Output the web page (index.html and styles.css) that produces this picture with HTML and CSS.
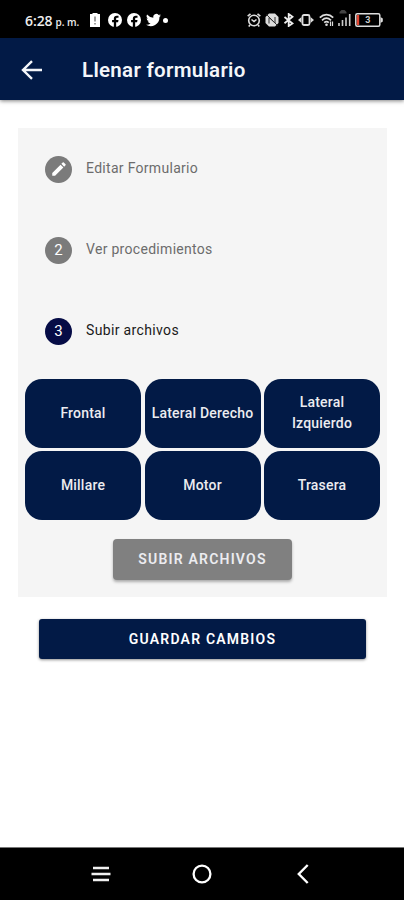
FILE: index.html
```html
<!DOCTYPE html>
<html lang="es">
<head>
<meta charset="utf-8">
<title>Llenar formulario</title>
<link rel="stylesheet" href="styles.css">
</head>
<body>
<div class="status">
  <span class="clock">6:28</span><span class="meridiem">p. m.</span>
  <div class="notifications">
    <svg width="10" height="14" viewBox="0 0 10 14"><path fill="#fff" d="M2.500 1V0h5v1H10v13H0V1z"/><path stroke="#777" stroke-width="1.400" d="M5 3.500v5M5 10v1.600"/></svg>
    <svg width="14" height="14" viewBox="0 0 24 24"><circle cx="12" cy="12" r="12" fill="#fff"/><path fill="#000" d="M10 24v-8H7v-4h3V9.500C10 6 12 4.500 15 4.500h3V8h-2c-1.500 0-2 .6-2 1.800V12h4l-.7 4H14v8z"/></svg>
    <svg width="14" height="14" viewBox="0 0 24 24"><circle cx="12" cy="12" r="12" fill="#fff"/><path fill="#000" d="M10 24v-8H7v-4h3V9.500C10 6 12 4.500 15 4.500h3V8h-2c-1.500 0-2 .6-2 1.800V12h4l-.7 4H14v8z"/></svg>
    <svg width="15" height="14" viewBox="0 2 24 20"><path fill="#fff" d="M24 4.600a10 10 0 0 1-2.800.8 5 5 0 0 0 2.100-2.700 10 10 0 0 1-3.100 1.200 4.900 4.900 0 0 0-8.400 4.500A14 14 0 0 1 1.700 3.200a4.900 4.900 0 0 0 1.500 6.500 5 5 0 0 1-2.200-.6 4.900 4.900 0 0 0 3.900 4.900 5 5 0 0 1-2.200.1 4.900 4.900 0 0 0 4.600 3.400A10 10 0 0 1 0 19.500 14 14 0 0 0 21.500 7.100 10 10 0 0 0 24 4.600z"/></svg>
    <i class="dot"></i>
  </div>
  <div class="system">
    <svg width="14" height="14" viewBox="0 0 14 14" fill="none" stroke="#ddd" stroke-width="1.600"><circle cx="7" cy="7.500" r="5.300"/><path d="M4.500 6.500L7 8.500l2.500-2M.7 3.200L3.500.8M13.300 3.200L10.500.8M3 12l-1.300 1.500M11 12l1.300 1.500"/></svg>
    <svg width="14" height="14" viewBox="0 0 14 14"><path fill="#ddd" d="M4 .5h6L13.500 4v6L10 13.500H4L.5 10V4z"/><path d="M4 10.500v-6l6 5.500V4M1.500 1.500l11 11" fill="none" stroke="#333" stroke-width="1"/></svg>
    <svg width="11" height="14" viewBox="0 0 10 14"><path d="M1 4l8 6.500L5.200 13V1L9 3.800 1 10.300" fill="none" stroke="#eee" stroke-width="1.800"/></svg>
    <svg width="16" height="12" viewBox="0 0 16 12"><rect x="4.500" y="1" width="7" height="10" rx="1.500" fill="none" stroke="#ddd" stroke-width="1.800"/><path fill="#ddd" d="M3.500 3v6L0 6zM12.500 3v6L16 6z"/></svg>
    <svg width="15" height="14" viewBox="0 0 15 14"><path d="M.8 4.700c4-4 9.400-4 13.400 0M3 7.300c2.800-2.600 6.200-2.600 9 0M5.200 9.700c1.500-1.300 3.100-1.300 4.600 0" fill="none" stroke="#ddd" stroke-width="1.700"/><circle cx="7.500" cy="11.800" r="1.300" fill="#ddd"/><path d="M11.500 13V8.500M13.500 8.500V13" stroke="#ddd" stroke-width="1.200"/></svg>
    <svg class="signal" width="13" height="18" viewBox="0 0 13 18"><path d="M1 17v-3M4.500 17v-6M8 17V8.500M11.700 17V5" stroke="#ccc" stroke-width="1.600"/><path d="M1.500 4.500V3L3.500 1h3l2 2v1.500z" fill="#444"/></svg>
    <svg width="28" height="14" viewBox="0 0 28 14"><rect x=".8" y=".8" width="24" height="12.400" rx="1.500" fill="none" stroke="#ddd" stroke-width="1.500"/><path fill="#ddd" d="M25.500 4l2.300 1.500v3L25.500 10z"/><path fill="#e24531" d="M1.800 2h2.400v10H1.800z"/><text x="12.900" y="10" text-anchor="middle" class="level">3</text></svg>
  </div>
</div>
<header class="appbar">
  <svg width="22" height="20" viewBox="0 0 22 20"><path d="M21 10H2M11 1.200L2 10l9 8.800" fill="none" stroke="#f4f6fa" stroke-width="2.400"/></svg>
  <h1>Llenar formulario</h1>
</header>
<main>
  <section class="card">
    <div class="step"><span class="badge"><svg width="18" height="18" viewBox="0 0 24 24"><path fill="#fff" d="M3 17.250V21h3.750L17.810 9.940l-3.750-3.750zM20.710 7.040a1 1 0 0 0 0-1.410l-2.340-2.340a1 1 0 0 0-1.410 0l-1.830 1.830 3.750 3.750z"/></svg></span><span class="label">Editar Formulario</span></div>
    <div class="step"><span class="badge">2</span><span class="label">Ver procedimientos</span></div>
    <div class="step active"><span class="badge">3</span><span class="label">Subir archivos</span></div>
    <div class="tiles">
      <button>Frontal</button><button>Lateral Derecho</button><button>Lateral<br>Izquierdo</button>
      <button>Millare</button><button>Motor</button><button>Trasera</button>
    </div>
    <button class="upload">SUBIR ARCHIVOS</button>
  </section>
  <button class="save">GUARDAR CAMBIOS</button>
</main>
<nav>
  <svg width="20" height="18" viewBox="0 0 20 18"><path d="M2 3h16M.5 9h19M2 15h16" fill="none" stroke="#f0f0f0" stroke-width="2.600"/></svg>
  <svg width="20" height="20" viewBox="0 0 20 20"><circle cx="10" cy="10" r="8.400" fill="none" stroke="#fff" stroke-width="2.300"/></svg>
  <svg width="12" height="20" viewBox="0 0 12 20"><path d="M10.700 1L1.800 10l8.900 9" fill="none" stroke="#fff" stroke-width="2.400"/></svg>
</nav>
</body>
</html>
```
FILE: styles.css
```css
* { box-sizing: border-box; }
body {
  margin: 0;
  height: 900px;
  display: flex;
  flex-direction: column;
  background: #fff;
  font-family: Roboto, sans-serif;
  overflow: hidden;
}
svg { display: block; flex: none; }
button {
  border: 0;
  padding: 0;
  font-family: inherit;
  color: #ececf0;
}
.status {
  height: 38px;
  flex: none;
  display: flex;
  align-items: center;
  padding: 2px 21px 0 25px;
  background: #000;
  color: #eee;
}
.clock { font: 600 14px "Open Sans", sans-serif; letter-spacing: -.1px; }
.meridiem { font: 600 10px "Open Sans", sans-serif; margin: 3px 0 0 3px; width: 25px; white-space: nowrap; }
.notifications { display: flex; align-items: center; margin-left: 10px; gap: 5px; }
.notifications svg:first-child { margin-right: 3px; }
.dot { width: 5px; height: 5px; border-radius: 50%; background: #fff; margin-left: -3px; }
.system { display: flex; align-items: center; gap: 4.200px; margin-left: auto; }
.signal { margin-top: -4px; }
.level { font: 700 9px Roboto, sans-serif; fill: #ccc; }
.appbar {
  height: 62px;
  flex: none;
  display: flex;
  align-items: center;
  padding: 2px 21px 0;
  gap: 39px;
  background: #021a46;
  box-shadow: 0 1px 4px rgba(0, 0, 0, .5);
}
h1 { margin: 0; font-size: 20.500px; font-weight: 600; color: #f4f6fa; letter-spacing: .3px; }
main { flex: 1; padding: 28px 17px 0 18px; }
.card { height: 469px; background: #f5f5f5; padding-top: .5px; }
.step {
  height: 81px;
  display: flex;
  align-items: center;
  padding-left: 27px;
  gap: 14px;
  font-size: 14px;
  color: #6c6c6c;
}
.badge {
  width: 27px;
  height: 27px;
  border-radius: 50%;
  background: #7b7b7b;
  color: #fff;
  font-size: 15px;
  display: flex;
  align-items: center;
  justify-content: center;
}
.label { letter-spacing: .3px; margin-top: -2px; }
.active { color: #1a1a1a; }
.active .label { letter-spacing: .35px; }
.active .badge { background: #060c46; }
.tiles {
  display: grid;
  grid-template-columns: repeat(3, 116px);
  grid-auto-rows: 69px;
  gap: 3px 3.500px;
  margin: 7px 0 0 7px;
}
.tiles button {
  background: #021a46;
  border-radius: 17px;
  font-size: 14px;
  font-weight: 500;
  line-height: 21px;
  letter-spacing: .2px;
  white-space: nowrap;
}
.upload {
  display: block;
  width: 179px;
  height: 41px;
  margin: 19.500px 0 0 95px;
  padding-bottom: 1px;
  border-radius: 4px;
  background: #808080;
  font-size: 14px;
  font-weight: 600;
  letter-spacing: 1.200px;
  box-shadow: 0 2px 3px rgba(0, 0, 0, .3);
}
.save {
  display: block;
  width: 327px;
  height: 40px;
  margin: 22px 0 0 21px;
  border-radius: 3px;
  background: #021a46;
  font-size: 14px;
  font-weight: 600;
  letter-spacing: 1.200px;
  color: #fff;
  box-shadow: 0 1px 3px rgba(0, 0, 0, .45);
}
nav {
  height: 53px;
  flex: none;
  display: grid;
  grid-template-columns: 101px 101px 101px;
  justify-content: center;
  justify-items: center;
  align-items: center;
  background: #000;
  border-top: 1px solid #777;
}
```
